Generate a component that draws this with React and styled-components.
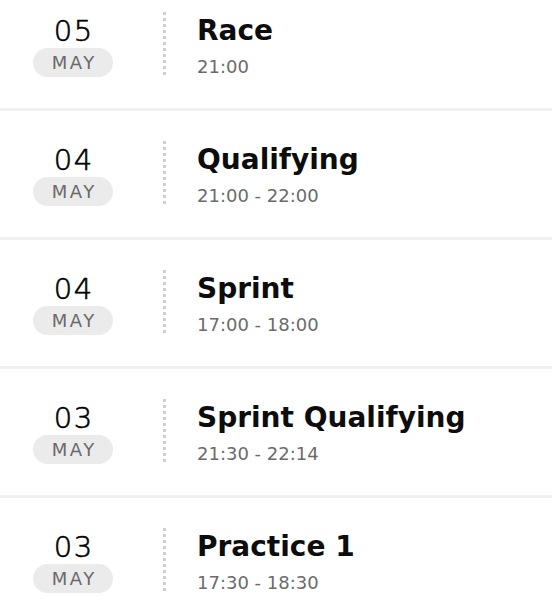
import React from "react";
import styled, { createGlobalStyle } from "styled-components";

const Global = createGlobalStyle`
  html, body { margin: 0; padding: 0; background: #fff; }
  body { overflow: hidden; font-family: "DejaVu Sans", "Liberation Sans", sans-serif; }
`;

const List = styled.div`
  display: flex;
  flex-direction: column;
  margin-top: -18px;
`;

const Row = styled.div`
  display: flex;
  align-items: flex-start;
  padding: 30px 0 0 33px;
  height: 96px;
  border-bottom: 3px solid #f1f1f1;
`;

const DateCol = styled.div`
  width: 80px;
  display: flex;
  flex-direction: column;
  align-items: center;
`;

const Day = styled.div`
  margin-top: 3px;
  font-size: 29px;
  line-height: 32px;
  font-weight: 300;
  color: #000;
  -webkit-text-stroke: 0.6px #000;
  letter-spacing: 1.5px;
  padding-left: 1.5px;
`;

const Month = styled.div`
  margin-top: 1px;
  width: 80px;
  height: 29px;
  border-radius: 15px;
  background: #ebebeb;
  color: #6a6a6a;
  font-size: 18px;
  line-height: 29px;
  font-weight: 400;
  letter-spacing: 2.5px;
  text-indent: 2.5px;
  text-align: center;
`;

const Divider = styled.div`
  width: 3px;
  height: 66px;
  margin: 0 31px 0 50px;
  background-image: linear-gradient(to bottom, #cfcfcf 50%, transparent 50%);
  background-size: 3px 6px;
`;

const Info = styled.div`
  display: flex;
  flex-direction: column;
`;

const Title = styled.div`
  margin-top: 3px;
  font-size: 28px;
  line-height: 32px;
  font-weight: 700;
  color: #0d0d0d;
`;

const Time = styled.div`
  margin-top: 9px;
  font-size: 18px;
  line-height: 22px;
  color: #6b6b6b;
`;

const sessions = [
  { day: "05", month: "MAY", title: "Race", time: "21:00" },
  { day: "04", month: "MAY", title: "Qualifying", time: "21:00 - 22:00" },
  { day: "04", month: "MAY", title: "Sprint", time: "17:00 - 18:00" },
  { day: "03", month: "MAY", title: "Sprint Qualifying", time: "21:30 - 22:14" },
  { day: "03", month: "MAY", title: "Practice 1", time: "17:30 - 18:30" },
];

export default function App() {
  return (
    <>
      <Global />
      <List>
        {sessions.map((s, i) => (
          <Row key={i}>
            <DateCol>
              <Day>{s.day}</Day>
              <Month>{s.month}</Month>
            </DateCol>
            <Divider />
            <Info>
              <Title>{s.title}</Title>
              <Time>{s.time}</Time>
            </Info>
          </Row>
        ))}
      </List>
    </>
  );
}
